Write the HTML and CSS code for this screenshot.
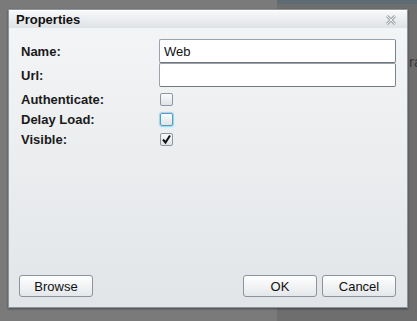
FILE: index.html
```html
<!DOCTYPE html>
<html lang="en">
<head>
    <meta charset="UTF-8">
    <title>Properties</title>
    <link rel="stylesheet" href="styles.css">
</head>
<body>

<div class="backdrop">
    <div class="page-left"></div>
    <div class="page-right">
        <div class="page-strip"></div>
        <div class="page-text">ra</div>
    </div>
</div>

<!-- Properties dialog -->
<div class="dialog">
    <div class="dialog-title">
        <span>Properties</span>
        <svg class="close-icon" width="10" height="10" viewBox="0 0 10 10">
            <path d="M1 1 L9 9 M9 1 L1 9" stroke="#a4a8ac" stroke-width="3" fill="none"/>
            <path d="M1 1 L9 9 M9 1 L1 9" stroke="#f2f3f4" stroke-width="1" fill="none"/>
        </svg>
    </div>

    <div class="dialog-body">
        <div class="form-grid">
            <label class="form-label">Name:</label>
            <input type="text" class="form-input" value="Web">

            <label class="form-label">Url:</label>
            <input type="text" class="form-input" value="">

            <label class="form-label">Authenticate:</label>
            <div class="check-cell"><span class="check-box"></span></div>

            <label class="form-label">Delay Load:</label>
            <div class="check-cell"><span class="check-box focused"></span></div>

            <label class="form-label">Visible:</label>
            <div class="check-cell">
                <span class="check-box">
                    <svg width="11" height="11" viewBox="0 0 11 11">
                        <path d="M2 5.5 L4.5 8.5 L9 1.5" stroke="#111" stroke-width="2" fill="none"/>
                    </svg>
                </span>
            </div>
        </div>
    </div>

    <div class="dialog-footer">
        <button class="dlg-btn">Browse</button>
        <div class="footer-right">
            <button class="dlg-btn">OK</button>
            <button class="dlg-btn">Cancel</button>
        </div>
    </div>
</div>

</body>
</html>
```

FILE: styles.css
```css
/* General styles */
body {
    margin: 0;
    padding: 0;
    width: 417px;
    height: 321px;
    overflow: hidden;
    font-family: "Liberation Sans", Arial, sans-serif;
    background-color: #787878;
}

/* Page behind the overlay */
.backdrop {
    display: flex;
    height: 321px;
}

.page-left {
    flex: none;
    width: 277px;
    background-color: #7a7a7a;
}

.page-right {
    flex: 1;
    min-width: 0;
    background-color: #6e6e6e;
}

.page-strip {
    height: 4px;
    background-color: #5e6b73;
}

.page-text {
    padding: 49px 0 0 132px;
    font-size: 15px;
    color: #3a3a3a;
    white-space: nowrap;
}

/* Dialog */
.dialog {
    position: absolute;
    left: 8px;
    top: 9px;
    width: 398px;
    height: 297px;
    border: 1px solid #8d949b;
    background: linear-gradient(#f4f5f6, #e2e5e8);
    box-shadow: 0 1px 2px rgba(0, 0, 0, 0.4);
    display: flex;
    flex-direction: column;
}

.dialog-title {
    height: 17px;
    display: flex;
    justify-content: space-between;
    align-items: center;
    padding: 0 11px 0 7px;
    background: linear-gradient(#f7f8f9, #dfe2e5);
    font-size: 13px;
    font-weight: bold;
    color: #111;
    border-top: 1px solid #fff;
}

.close-icon {
    display: block;
}

.dialog-body {
    flex: 1;
    padding: 11px 11px 0 12px;
}

.form-grid {
    display: grid;
    grid-template-columns: 138px 1fr;
    grid-template-rows: 24px 26px 20px 20px 20px;
    align-items: start;
}

.form-label {
    height: 20px;
    font-size: 13px;
    font-weight: bold;
    color: #1a1a1a;
    display: flex;
    align-items: center;
}

.form-grid .form-label:nth-child(-n+4) {
    height: 24px;
}

.form-input {
    box-sizing: border-box;
    width: 237px;
    height: 24px;
    margin: 0;
    padding: 0 4px;
    border: 1px solid #9aa3ab;
    border-right-color: #7b848c;
    border-bottom-color: #6f7880;
    border-radius: 2px;
    background-color: #fff;
    font-family: "Liberation Sans", Arial, sans-serif;
    font-size: 13px;
    color: #111;
}

.check-cell {
    height: 20px;
    display: flex;
    align-items: center;
    padding-left: 1px;
}

.check-box {
    box-sizing: border-box;
    width: 13px;
    height: 13px;
    border: 1px solid #8e979f;
    border-radius: 2px;
    background: linear-gradient(#fafbfc, #dfe3e7);
    display: flex;
    align-items: center;
    justify-content: center;
}

.check-box.focused {
    border-color: #4aa3c4;
    box-shadow: 0 0 1px 1px #9fd3e6;
}

/* Footer buttons */
.dialog-footer {
    display: flex;
    justify-content: space-between;
    padding: 0 11px 10px 10px;
}

.footer-right {
    display: flex;
    gap: 5px;
}

.dlg-btn {
    width: 74px;
    height: 22px;
    padding: 0;
    border: 1px solid #8c939a;
    border-radius: 3px;
    background: linear-gradient(#ffffff, #e4e7ea);
    font-family: "Liberation Sans", Arial, sans-serif;
    font-size: 13px;
    color: #111;
    cursor: pointer;
}
```
